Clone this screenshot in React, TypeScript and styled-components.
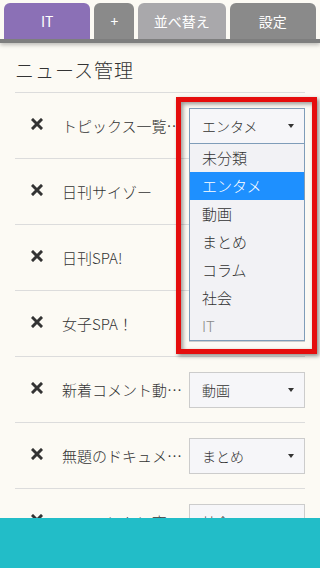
import React from 'react';
import styled, { createGlobalStyle } from 'styled-components';

type Category = '未分類' | 'エンタメ' | '動画' | 'まとめ' | 'コラム' | '社会' | 'IT';

type Feed = {
  title: string;
  category: Category;
  open?: boolean;
};

const CATEGORIES: Category[] = ['未分類', 'エンタメ', '動画', 'まとめ', 'コラム', '社会', 'IT'];

const FEEDS: Feed[] = [
  { title: 'トピックス一覧ニュース', category: 'エンタメ', open: true },
  { title: '日刊サイゾー', category: 'エンタメ' },
  { title: '日刊SPA!', category: 'まとめ' },
  { title: '女子SPA！', category: 'コラム' },
  { title: '新着コメント動画一覧', category: '動画' },
  { title: '無題のドキュメント', category: 'まとめ' },
  { title: 'ハフィントン夜にけれ', category: '社会' },
];

const GlobalStyle = createGlobalStyle`
  html, body {
    margin: 0;
    padding: 0;
    background: #fcfaf4;
  }

  body {
    font-family: "Noto Sans CJK JP", "Liberation Sans", sans-serif;
    font-weight: 300;
    color: #333;
  }
`;

const Page = styled.div`
  min-height: 568px;
  padding-bottom: 60px;
  background: #fcfaf4;
`;

const TabBar = styled.nav`
  display: flex;
  gap: 4px;
  padding: 3px 4px 0;
  border-bottom: 4px solid #7e7e7e;
  box-shadow: 0 2px 4px rgba(0, 0, 0, 0.25);
  background: #fcfaf4;
`;

const Tab = styled.div<{ $color: string; $width: number }>`
  display: flex;
  align-items: center;
  justify-content: center;
  width: ${ (p) => p.$width }px;
  height: 36px;
  border-radius: 6px 6px 0 0;
  background: ${ (p) => p.$color };
  color: #fff;
  font-size: 14px;
  font-weight: 400;
`;

const Content = styled.main`
  padding: 0 15px;
`;

const Heading = styled.h1`
  margin: 0;
  height: 50px;
  display: flex;
  align-items: center;
  padding-top: 4px;
  box-sizing: border-box;
  font-size: 19px;
  font-weight: 300;
  letter-spacing: 1px;
  border-bottom: 1px solid #dcdcdc;
`;

const Row = styled.div`
  display: flex;
  align-items: center;
  height: 65px;
  border-bottom: 1px solid #dcdcdc;
`;

const DeleteButton = styled.span`
  display: flex;
  align-items: center;
  justify-content: center;
  width: 44px;
  height: 20px;
  margin-top: -4px;
`;

const Title = styled.span`
  flex: 1;
  min-width: 0;
  padding-left: 3px;
  padding-right: 6px;
  font-size: 15px;
  white-space: nowrap;
  overflow: hidden;
  text-overflow: ellipsis;
`;

const SelectWrap = styled.div`
  position: relative;
  flex: 0 0 116px;
`;

const SelectBox = styled.div<{ $open?: boolean }>`
  display: flex;
  align-items: center;
  justify-content: space-between;
  height: 36px;
  box-sizing: border-box;
  padding: 0 10px 0 12px;
  border: 1px solid ${ (p) => (p.$open ? '#7f9db9' : '#cccccc') };
  background: #f6f6f9;
  font-size: 14px;
`;

const Caret = styled.span`
  width: 0;
  height: 0;
  border-left: 3px solid transparent;
  border-right: 3px solid transparent;
  border-top: 4px solid #333;
`;

const OptionList = styled.ul`
  position: absolute;
  top: 100%;
  left: 0;
  right: 0;
  margin: 0;
  padding: 0;
  list-style: none;
  background: #f2f2f5;
  border: 1px solid #7f9db9;
  border-top: none;
  z-index: 2;
`;

const Option = styled.li<{ $active?: boolean; $muted?: boolean }>`
  height: 28px;
  line-height: 28px;
  padding-left: 12px;
  font-size: 15px;
  background: ${ (p) => (p.$active ? '#1e90ff' : 'transparent') };
  color: ${ (p) => (p.$active ? '#fff' : p.$muted ? '#8a8a8a' : '#333') };
`;

const Highlight = styled.div`
  position: absolute;
  left: -13px;
  top: -11px;
  width: 141px;
  height: 257px;
  box-sizing: border-box;
  border: 5px solid #e50d0d;
  box-shadow: 2px 2px 4px rgba(0, 0, 0, 0.45), inset 2px 2px 4px rgba(0, 0, 0, 0.4);
  z-index: 3;
  pointer-events: none;
`;

const Footer = styled.footer`
  position: fixed;
  left: 0;
  right: 0;
  bottom: 0;
  height: 50px;
  background: #22bdc8;
  z-index: 5;
`;

const CrossIcon = () => (
  <svg width="12" height="12" viewBox="0 0 12 12">
    <path d="M2 2 L10 10 M10 2 L2 10" stroke="#333" strokeWidth="3" strokeLinecap="square" />
  </svg>
);

const FeedRow = ({ feed }: { feed: Feed }) => (
  <Row>
    <DeleteButton><CrossIcon /></DeleteButton>
    <Title>{ feed.title }</Title>
    <SelectWrap>
      <SelectBox $open={ feed.open }>
        <span>{ feed.category }</span>
        <Caret />
      </SelectBox>
      { feed.open && (
        <>
          <OptionList>
            { CATEGORIES.map((c) => (
              <Option key={ c } $active={ c === feed.category } $muted={ c === 'IT' }>{ c }</Option>
            )) }
          </OptionList>
          <Highlight />
        </>
      ) }
    </SelectWrap>
  </Row>
);

export default function App() {
  return (
    <Page>
      <GlobalStyle />
      <TabBar>
        <Tab $color="#8b70b6" $width={ 87 }>IT</Tab>
        <Tab $color="#8a8a8a" $width={ 40 }>+</Tab>
        <Tab $color="#a9a8ab" $width={ 88 }>並べ替え</Tab>
        <Tab $color="#8a8a8a" $width={ 87 }>設定</Tab>
      </TabBar>
      <Content>
        <Heading>ニュース管理</Heading>
        { FEEDS.map((f) => <FeedRow key={ f.title } feed={ f } />) }
      </Content>
      <Footer />
    </Page>
  );
}
